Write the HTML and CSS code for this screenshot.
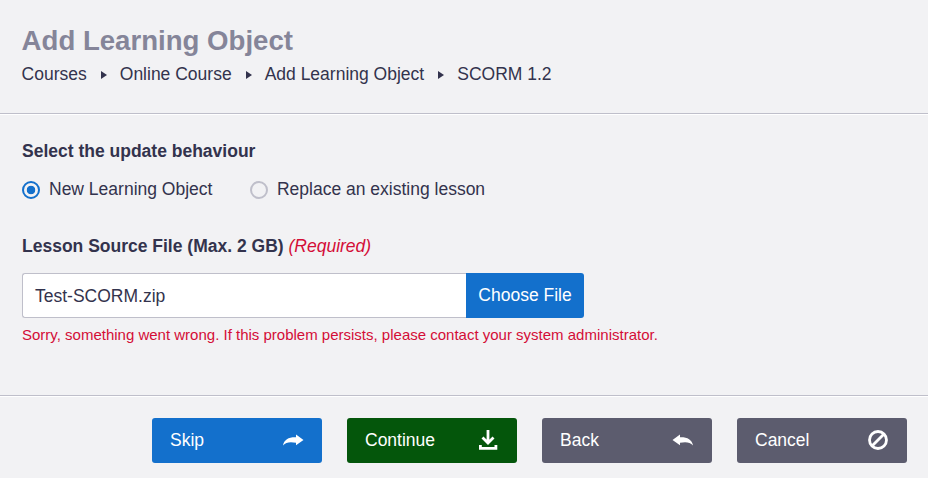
FILE: index.html
```html
<!DOCTYPE html>
<html lang="en">
<head>
    <meta charset="UTF-8">
    <meta name="viewport" content="width=device-width, initial-scale=1.0">
    <title>Add Learning Object</title>
    <link rel="stylesheet" href="styles.css">
</head>
<body>
    <header class="page-header">
        <h1>Add Learning Object</h1>
        <nav class="breadcrumb">
            <a href="#">Courses</a>
            <a href="#">Online Course</a>
            <a href="#">Add Learning Object</a>
            <span>SCORM 1.2</span>
        </nav>
    </header>

    <main class="content">
        <h2>Select the update behaviour</h2>
        <div class="radio-group">
            <label><input type="radio" name="behaviour" checked>New Learning Object</label>
            <label><input type="radio" name="behaviour">Replace an existing lesson</label>
        </div>

        <h2>Lesson Source File (Max. 2 GB) <em class="required">(Required)</em></h2>
        <div class="file-picker">
            <div class="file-name">Test-SCORM.zip</div>
            <button type="button" class="choose">Choose File</button>
        </div>
        <p class="error">Sorry, something went wrong. If this problem persists, please contact your system administrator.</p>
    </main>

    <footer class="actions">
        <button type="button" class="btn skip">Skip
            <svg width="22" height="22" viewBox="0 0 22 22"><path d="M1 16.5C2 10.5 7 8 14 8.3V5.5L21.5 11L14 16.2V13.8C8 12.6 4 13.2 1 16.5Z"/></svg>
        </button>
        <button type="button" class="btn continue">Continue
            <svg width="22" height="22" viewBox="0 0 22 22"><path class="line" d="M11 1V14M5.5 8.5L11 14L16.5 8.5M3.4 16V19.4H18.9V16"/></svg>
        </button>
        <button type="button" class="btn back">Back
            <svg width="22" height="22" viewBox="0 0 22 22"><path d="M21 16.5C20 10.5 15 8 8 8.3V5.5L0.5 11L8 16.2V13.8C14 12.6 18 13.2 21 16.5Z"/></svg>
        </button>
        <button type="button" class="btn cancel">Cancel
            <svg width="22" height="22" viewBox="0 0 22 22"><circle class="line" cx="11" cy="11" r="8.5"/><path class="line" d="M5 17L17 5"/></svg>
        </button>
    </footer>
</body>
</html>
```
FILE: styles.css
```css
* {
    box-sizing: border-box;
}
body {
    margin: 0;
    font-family: "Liberation Sans", Arial, sans-serif;
    font-size: 17.5px;
    line-height: 24px;
    color: #33334d;
    background-color: #f2f2f4;
}
button {
    font: inherit;
    color: #fff;
    border: none;
    cursor: pointer;
}

/* Header */
.page-header {
    height: 114px;
    padding: 23px 22px 0 21.6px;
    border-bottom: 1px solid #bfbfca;
}
h1 {
    margin: 0;
    font-size: 27.6px;
    line-height: 36px;
    color: #858599;
}
.breadcrumb {
    display: flex;
    margin-top: 3px;
}
.breadcrumb a {
    display: flex;
    align-items: center;
    color: inherit;
    text-decoration: none;
}
.breadcrumb a::after {
    content: "";
    margin: 1px 13px 0 14px;
    border-left: 6px solid #33334d;
    border-top: 4.5px solid transparent;
    border-bottom: 4.5px solid transparent;
}

/* Form */
.content {
    height: 281px;
    padding: 24px 22px 0;
    border-top: 1px solid #fff;
}
h2 {
    margin: 0;
    font-size: 17.5px;
    line-height: 24px;
}
.radio-group {
    display: flex;
    gap: 37.5px;
    margin: 14px 0 33px;
}
.radio-group label {
    display: flex;
    align-items: center;
}
input[type="radio"] {
    appearance: none;
    width: 18px;
    height: 18px;
    margin: 1px 9px 0 0;
    border: 2px solid #bfbfca;
    border-radius: 50%;
}
input[type="radio"]:checked {
    border-color: #1370cc;
    background: radial-gradient(circle, #1370cc 4px, transparent 4.6px);
}
.required {
    font-weight: normal;
    color: #d40d37;
}
.file-picker {
    display: flex;
    width: 562px;
    height: 45px;
    margin-top: 15px;
}
.file-name {
    flex: 1;
    padding: 10px 12px;
    background-color: #fff;
    border: 1px solid #bfbfca;
    border-right: none;
    border-radius: 3px 0 0 3px;
}
.choose {
    width: 118px;
    padding: 0 0 1px;
    background-color: #1370cc;
    border-radius: 0 3px 3px 0;
}
.error {
    margin: 6px 0 0;
    font-size: 15px;
    line-height: 22px;
    color: #d40d37;
}

/* Footer buttons */
.actions {
    display: flex;
    justify-content: flex-end;
    gap: 25px;
    height: 83px;
    padding: 22px 21px 0;
    border-top: 1px solid #bfbfca;
    box-shadow: inset 0 1px #fff;
}
.btn {
    display: flex;
    align-items: center;
    justify-content: space-between;
    width: 170px;
    height: 45px;
    padding: 0 18px 2px;
    border-radius: 3px;
}
.btn svg {
    fill: #fff;
}
.btn .line {
    fill: none;
    stroke: #fff;
    stroke-width: 2.8;
}
.skip {
    background-color: #1370cc;
}
.continue {
    background-color: #04560b;
}
.back, .cancel {
    background-color: #5c5c6e;
}
```
